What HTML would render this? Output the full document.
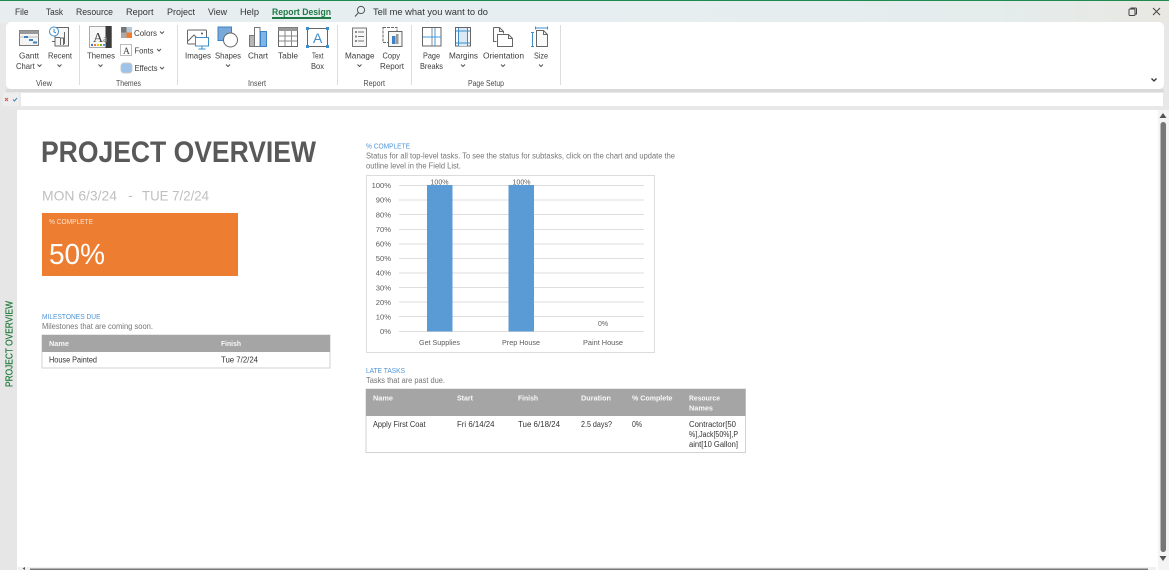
<!DOCTYPE html>
<html><head><meta charset="utf-8"><title>Project Overview</title>
<style>
html,body{margin:0;padding:0;width:1169px;height:570px;overflow:hidden;background:#fff}
svg{display:block;font-family:"Liberation Sans",sans-serif;filter:blur(.25px)}
.t{font-size:9.5px;fill:#333}
.r{font-size:8.4px;fill:#3c3c3c}
.g{font-size:7.8px;fill:#4c4c4c}
.b{font-size:7.5px;fill:#4f95d6}
.d{font-size:8px;fill:#767676}
.h{font-size:7.6px;fill:#f8f8f8;font-weight:bold}
.c{font-size:7.8px;fill:#333}
.a{font-size:7.6px;fill:#5c5c5c}
.ch{fill:none;stroke:#555;stroke-width:1}
</style></head><body>
<svg width="1169" height="570" viewBox="0 0 1169 570" xmlns="http://www.w3.org/2000/svg">
<defs><linearGradient id="tb" x1="0" x2="1" y1="0" y2="0"><stop offset="0" stop-color="#e8edf0"/><stop offset=".5" stop-color="#e6eef1"/><stop offset=".85" stop-color="#e4ecec"/><stop offset="1" stop-color="#e9e8e2"/></linearGradient></defs>
<rect width="1169" height="110" fill="#e8e8e8"/>
<rect width="1169" height="23" fill="url(#tb)"/>
<rect width="1169" height="1" fill="#1f8a50"/>
<g class="t">
<text x="15" y="15" textLength="13.500" lengthAdjust="spacingAndGlyphs">File</text>
<text x="46" y="15" textLength="17" lengthAdjust="spacingAndGlyphs">Task</text>
<text x="76" y="15" textLength="37" lengthAdjust="spacingAndGlyphs">Resource</text>
<text x="126" y="15" textLength="27.500" lengthAdjust="spacingAndGlyphs">Report</text>
<text x="167" y="15" textLength="28" lengthAdjust="spacingAndGlyphs">Project</text>
<text x="208" y="15" textLength="19" lengthAdjust="spacingAndGlyphs">View</text>
<text x="240" y="15" textLength="19" lengthAdjust="spacingAndGlyphs">Help</text>
<text x="272" y="15" textLength="59" lengthAdjust="spacingAndGlyphs" style="fill:#1d7a45;font-weight:bold">Report Design</text>
<text x="373" y="15" textLength="115" lengthAdjust="spacingAndGlyphs">Tell me what you want to do</text>
</g>
<rect x="272" y="17" width="59" height="2" fill="#1d7a45"/>
<circle cx="361" cy="10" r="3.600" fill="none" stroke="#555"/><path d="M358.400 12.800L355 16.500" stroke="#555" stroke-width="1.100"/>
<rect x="1129" y="9" width="6" height="6.500" rx="1" fill="none" stroke="#444"/><path d="M1131 9V8h4.500a1 1 0 0 1 1 1v5h-1" fill="none" stroke="#444"/>
<path d="M1153 8l7 7M1160 8l-7 7" stroke="#444" stroke-width="1"/>

<rect x="6" y="89" width="1158" height="3" fill="#d9d9d9"/>
<rect x="6" y="22" width="1158" height="67" rx="5" fill="#fff"/>
<g fill="#dcdcdc"><rect x="79" y="25" width="1" height="60"/><rect x="177" y="25" width="1" height="60"/><rect x="337" y="25" width="1" height="60"/><rect x="411" y="25" width="1" height="60"/><rect x="560" y="25" width="1" height="60"/></g>

<g class="r">
<text x="19" y="58.500" textLength="20" lengthAdjust="spacingAndGlyphs">Gantt</text><text x="16" y="69" textLength="18.700" lengthAdjust="spacingAndGlyphs">Chart</text>
<text x="48" y="58.500" textLength="24" lengthAdjust="spacingAndGlyphs">Recent</text>
<text x="87" y="58.500" textLength="28" lengthAdjust="spacingAndGlyphs">Themes</text>
<text x="185" y="58.500" textLength="26" lengthAdjust="spacingAndGlyphs">Images</text>
<text x="215" y="58.500" textLength="26" lengthAdjust="spacingAndGlyphs">Shapes</text>
<text x="248" y="58.500" textLength="20" lengthAdjust="spacingAndGlyphs">Chart</text>
<text x="278" y="58.500" textLength="20" lengthAdjust="spacingAndGlyphs">Table</text>
<text x="312" y="58.500" textLength="11.500" lengthAdjust="spacingAndGlyphs">Text</text><text x="311" y="69" textLength="13" lengthAdjust="spacingAndGlyphs">Box</text>
<text x="345" y="58.500" textLength="29.500" lengthAdjust="spacingAndGlyphs">Manage</text>
<text x="382.500" y="58.500" textLength="17.500" lengthAdjust="spacingAndGlyphs">Copy</text><text x="380" y="69" textLength="24" lengthAdjust="spacingAndGlyphs">Report</text>
<text x="423" y="58.500" textLength="17" lengthAdjust="spacingAndGlyphs">Page</text><text x="420" y="69" textLength="23" lengthAdjust="spacingAndGlyphs">Breaks</text>
<text x="449" y="58.500" textLength="29" lengthAdjust="spacingAndGlyphs">Margins</text>
<text x="483" y="58.500" textLength="41" lengthAdjust="spacingAndGlyphs">Orientation</text>
<text x="534" y="58.500" textLength="14" lengthAdjust="spacingAndGlyphs">Size</text>
<text x="134" y="36" textLength="23" lengthAdjust="spacingAndGlyphs">Colors</text>
<text x="134.500" y="53.500" textLength="19" lengthAdjust="spacingAndGlyphs">Fonts</text>
<text x="134.500" y="71" textLength="23" lengthAdjust="spacingAndGlyphs">Effects</text>
</g>
<g class="g">
<text x="36" y="86" textLength="16" lengthAdjust="spacingAndGlyphs">View</text>
<text x="116" y="86" textLength="25" lengthAdjust="spacingAndGlyphs">Themes</text>
<text x="248" y="86" textLength="18" lengthAdjust="spacingAndGlyphs">Insert</text>
<text x="363.500" y="86" textLength="21.500" lengthAdjust="spacingAndGlyphs">Report</text>
<text x="468" y="86" textLength="36" lengthAdjust="spacingAndGlyphs">Page Setup</text>
</g>
<g class="ch">
<path d="M37.500 64.500l2 2 2-2M57.500 64.500l2 2 2-2M98.500 64.500l2 2 2-2M226 64.500l2 2 2-2M357.500 64.500l2 2 2-2M461 64.500l2 2 2-2M501 64.500l2 2 2-2M539 64.500l2 2 2-2"/>
<path d="M160 31.500l2 2 2-2M157 49l2 2 2-2M160 67l2 2 2-2"/>
<path d="M1151.500 78.500l2.500 2.500 2.500-2.500" stroke-width="1.300" stroke="#333"/>
</g>

<!-- Gantt -->
<rect x="19.500" y="30.500" width="19" height="15" fill="#f4f4f4" stroke="#777"/><rect x="19.500" y="30.500" width="19" height="3.500" fill="#999"/>
<path d="M19.500 37h19" stroke="#bbb"/><rect x="24" y="36" width="4" height="2" fill="#3d83c4"/><rect x="29" y="39" width="4" height="2" fill="#3d83c4"/><rect x="33" y="41.500" width="4" height="2" fill="#3d83c4"/>
<!-- Recent -->
<path d="M55 27.500h13.500v18.500h-13.500z" fill="#f7f7f7" stroke="#666"/>
<path d="M60.500 45v-7h3v7M64.500 44v-12M52 41.500h3v-4h5" fill="none" stroke="#666"/>
<circle cx="54" cy="31.500" r="4.500" fill="#fff" stroke="#3d8ecb"/><path d="M54 29v3l2 1" fill="none" stroke="#3d8ecb"/>
<!-- Themes -->
<rect x="89.500" y="26.500" width="22" height="21" fill="#f8f8f8" stroke="#aaa"/><rect x="105.500" y="26" width="6" height="22" fill="#3b3b3b"/>
<text x="93" y="42" font-size="14" font-family="Liberation Serif" fill="#444">A</text><text x="103" y="42" font-size="10" font-family="Liberation Serif" fill="#777">a</text>
<g><rect x="91" y="44" width="2" height="2" fill="#4472c4"/><rect x="94" y="44" width="2" height="2" fill="#ed7d31"/><rect x="97" y="44" width="2" height="2" fill="#ffc000"/><rect x="100" y="44" width="2" height="2" fill="#70ad47"/><rect x="103" y="44" width="2" height="2" fill="#5b9bd5"/></g>
<!-- Colors, Fonts, Effects -->
<rect x="121" y="27" width="5.500" height="5.500" fill="#777"/><rect x="126.500" y="27" width="5.500" height="5.500" fill="#b5c8d8"/><rect x="121" y="32.500" width="5.500" height="5.500" fill="#aaa"/><rect x="126.500" y="32.500" width="5.500" height="5.500" fill="#ee7d31"/>
<rect x="120.500" y="44.500" width="11" height="11" fill="#fff" stroke="#bbb"/><text x="123" y="54" font-size="9.500" font-family="Liberation Serif" fill="#444">A</text>
<rect x="121" y="63" width="11" height="10" rx="3" fill="#9dc3e8" stroke="#c9c9c9"/>
<!-- Images -->
<rect x="187.500" y="30" width="19" height="14" rx="1" fill="#fff" stroke="#666"/><path d="M188 41l6-6 5 5" fill="none" stroke="#666"/><circle cx="202" cy="33.500" r="1" fill="#555"/>
<rect x="195.500" y="37.500" width="13" height="8.500" fill="#fff" stroke="#3d8ecb"/><path d="M202 46v2.500M198.500 49h7" stroke="#3d8ecb"/>
<!-- Shapes -->
<rect x="218" y="27" width="13.500" height="13.500" fill="#79a9d9" stroke="#3d83c4"/><circle cx="230.500" cy="40" r="7" fill="#fff" stroke="#666"/>
<!-- Chart -->
<rect x="249.500" y="35.500" width="5" height="11" fill="#b5b5b5" stroke="#777"/><rect x="254.500" y="27.500" width="5.500" height="19" fill="#fff" stroke="#777"/><rect x="260.500" y="31.500" width="6" height="15" fill="#7fb4e4" stroke="#3d83c4"/>
<!-- Table -->
<rect x="278.500" y="27.500" width="19" height="19" fill="#fff" stroke="#666"/><rect x="278.500" y="27.500" width="19" height="3.500" fill="#999"/><path d="M285 31v15M291.500 31v15M279 36h18M279 41h18" stroke="#888" fill="none"/>
<!-- Text box -->
<rect x="307.500" y="28.500" width="20" height="18" fill="#fff" stroke="#666"/><text x="313" y="43" font-size="14" fill="#3d8ecb">A</text>
<g fill="#3d8ecb"><rect x="306" y="27" width="3" height="3"/><rect x="326" y="27" width="3" height="3"/><rect x="306" y="45" width="3" height="3"/><rect x="326" y="45" width="3" height="3"/></g>
<!-- Manage -->
<rect x="352.500" y="28" width="14" height="18.500" fill="#f6f6f6" stroke="#777"/><path d="M358 32h6M358 36.500h6M358 41h6" stroke="#777"/><g fill="#888"><rect x="355" y="31" width="2" height="2"/><rect x="355" y="35.500" width="2" height="2"/><rect x="355" y="40" width="2" height="2"/></g>
<!-- Copy report -->
<rect x="383" y="27.500" width="14" height="15" fill="#fff" stroke="#666" stroke-dasharray="3 1"/><rect x="388.500" y="31.500" width="13.500" height="15" fill="#f6f6f6" stroke="#666"/><rect x="392" y="36" width="3.500" height="8" fill="#3d83c4"/><rect x="396" y="34" width="2.500" height="10" fill="#999"/>
<!-- Page Breaks -->
<rect x="422.500" y="27.500" width="18.500" height="18.500" fill="#fff" stroke="#666"/><path d="M432 28v18" stroke="#888"/><path d="M423 37h18M435 28v18" stroke="#3d9be0"/>
<!-- Margins -->
<rect x="455.500" y="27.500" width="15" height="18.500" fill="#f8f8f8" stroke="#666"/><rect x="458" y="28" width="10" height="18" fill="#dbe9f6"/><path d="M458.500 28v18M467.500 28v18M456 31h14M456 43h14" stroke="#3d8ecb"/>
<!-- Orientation -->
<path d="M493.500 27.500h6l4 4v2M493.500 27.500v14h3" fill="#f8f8f8" stroke="#666"/><path d="M497.500 34.500h11l4 4v8h-15z" fill="#fff" stroke="#666"/><path d="M499.500 27.500v4h4M508.500 34.500v4h4" fill="none" stroke="#666"/>
<!-- Size -->
<path d="M536.500 30.500h7l4 4v12h-11z" fill="#fafafa" stroke="#666"/><path d="M543.500 30.500v4h4" fill="none" stroke="#666"/>
<path d="M535.500 28h12M535.500 26.500v3M547.500 26.500v3M532.500 32.500v14M531 32.500h3M531 46.500h3" stroke="#3d8ecb" fill="none"/>

<!-- Formula bar -->
<rect x="3" y="93" width="16" height="13" fill="#eee"/>
<path d="M5 98l3 3M8 98l-3 3" stroke="#d9534f"/><path d="M13 99.500l1.500 1.500 2.500-3" fill="none" stroke="#4a7fb5"/>
<rect x="21" y="93" width="1142" height="13" fill="#fff"/>

<!-- Sheet -->
<rect x="0" y="110" width="17" height="460" fill="#e6e6e6"/>
<rect x="17" y="110" width="1152" height="460" fill="#fff"/>
<text transform="translate(12.500,387) rotate(-90)" font-size="9.800" fill="#217a3c" stroke="#217a3c" stroke-width=".2" textLength="86" lengthAdjust="spacingAndGlyphs">PROJECT OVERVIEW</text>

<text x="41" y="162" font-size="29.500" font-weight="bold" fill="#595959" textLength="275" lengthAdjust="spacingAndGlyphs">PROJECT OVERVIEW</text>
<g font-size="14" fill="#bfbfbf">
<text x="42" y="200.500" textLength="75" lengthAdjust="spacingAndGlyphs">MON 6/3/24</text>
<text x="128" y="200">-</text>
<text x="142" y="200.500" textLength="67" lengthAdjust="spacingAndGlyphs">TUE 7/2/24</text>
</g>
<rect x="42" y="213" width="196" height="63" fill="#ed7d31"/>
<text x="49" y="224" font-size="7.200" fill="#fbe3d2" textLength="44" lengthAdjust="spacingAndGlyphs">% COMPLETE</text>
<text x="49" y="264" font-size="29" fill="#fff" textLength="56" lengthAdjust="spacingAndGlyphs">50%</text>

<text class="b" x="42" y="319" textLength="58.500" lengthAdjust="spacingAndGlyphs">MILESTONES DUE</text>
<text class="d" x="42" y="329" textLength="111" lengthAdjust="spacingAndGlyphs">Milestones that are coming soon.</text>
<rect x="42" y="335" width="288" height="33" fill="#fff" stroke="#d2d2d2"/>
<rect x="42" y="335" width="288" height="17" fill="#a5a5a5"/>
<text class="h" x="49" y="346" textLength="20" lengthAdjust="spacingAndGlyphs">Name</text><text class="h" x="221" y="346" textLength="20" lengthAdjust="spacingAndGlyphs">Finish</text>
<text class="c" x="49" y="362.500" textLength="48" lengthAdjust="spacingAndGlyphs">House Painted</text>
<text class="c" x="221" y="362.500" textLength="37" lengthAdjust="spacingAndGlyphs">Tue 7/2/24</text>

<text class="b" x="366" y="148.500" textLength="44" lengthAdjust="spacingAndGlyphs">% COMPLETE</text>
<text class="d" x="366" y="158.500" textLength="309" lengthAdjust="spacingAndGlyphs">Status for all top-level tasks. To see the status for subtasks, click on the chart and update the</text>
<text class="d" x="366" y="168.500" textLength="95" lengthAdjust="spacingAndGlyphs">outline level in the Field List.</text>

<rect x="366.500" y="175.500" width="288" height="177" fill="#fff" stroke="#dcdcdc"/>
<g stroke="#dedede" stroke-width="1">
<path d="M399 185.500h245M399 200h245M399 214.500h245M399 229.500h245M399 244h245M399 258.500h245M399 273h245M399 287.500h245M399 302h245M399 316.500h245M399 331.500h245"/>
</g>
<rect x="427" y="185" width="25.500" height="146.500" fill="#5b9bd5"/>
<rect x="508.500" y="185" width="25.500" height="146.500" fill="#5b9bd5"/>
<g class="a" text-anchor="end">
<text x="391" y="188">100%</text><text x="391" y="202.700">90%</text><text x="391" y="217.300">80%</text><text x="391" y="232">70%</text><text x="391" y="246.500">60%</text><text x="391" y="261">50%</text><text x="391" y="275.700">40%</text><text x="391" y="290.300">30%</text><text x="391" y="304.800">20%</text><text x="391" y="319.500">10%</text><text x="391" y="334">0%</text>
</g>
<g class="a">
<text x="430.500" y="184.500" textLength="18" lengthAdjust="spacingAndGlyphs">100%</text><text x="512.500" y="184.500" textLength="18" lengthAdjust="spacingAndGlyphs">100%</text><text x="598" y="326" textLength="10" lengthAdjust="spacingAndGlyphs">0%</text>
<text x="419" y="345" textLength="41" lengthAdjust="spacingAndGlyphs">Get Supplies</text><text x="502" y="345" textLength="38" lengthAdjust="spacingAndGlyphs">Prep House</text><text x="583" y="345" textLength="40" lengthAdjust="spacingAndGlyphs">Paint House</text>
</g>

<text class="b" x="366" y="373" textLength="39" lengthAdjust="spacingAndGlyphs">LATE TASKS</text>
<text class="d" x="366" y="383" textLength="79" lengthAdjust="spacingAndGlyphs">Tasks that are past due.</text>
<rect x="366" y="389" width="379.500" height="63.500" fill="#fff" stroke="#d2d2d2"/>
<rect x="366" y="389" width="379.500" height="27" fill="#a5a5a5"/>
<g class="h">
<text x="373" y="400.500" textLength="20" lengthAdjust="spacingAndGlyphs">Name</text>
<text x="457" y="400.500" textLength="16" lengthAdjust="spacingAndGlyphs">Start</text>
<text x="518" y="400.500" textLength="20" lengthAdjust="spacingAndGlyphs">Finish</text>
<text x="581" y="400.500" textLength="30" lengthAdjust="spacingAndGlyphs">Duration</text>
<text x="632" y="400.500" textLength="40.500" lengthAdjust="spacingAndGlyphs">% Complete</text>
<text x="689" y="400.500" textLength="31" lengthAdjust="spacingAndGlyphs">Resource</text>
<text x="689" y="410.500" textLength="24" lengthAdjust="spacingAndGlyphs">Names</text>
</g>
<g class="c">
<text x="373" y="427" textLength="52.500" lengthAdjust="spacingAndGlyphs">Apply First Coat</text>
<text x="457" y="427" textLength="37.500" lengthAdjust="spacingAndGlyphs">Fri 6/14/24</text>
<text x="518" y="427" textLength="42" lengthAdjust="spacingAndGlyphs">Tue 6/18/24</text>
<text x="581" y="427" textLength="31" lengthAdjust="spacingAndGlyphs">2.5 days?</text>
<text x="632" y="427" textLength="10" lengthAdjust="spacingAndGlyphs">0%</text>
<text x="689" y="427" textLength="47" lengthAdjust="spacingAndGlyphs">Contractor[50</text>
<text x="689" y="437" textLength="49" lengthAdjust="spacingAndGlyphs">%],Jack[50%],P</text>
<text x="689" y="447" textLength="49" lengthAdjust="spacingAndGlyphs">aint[10 Gallon]</text>
</g>

<!-- Scrollbars -->
<rect x="1158" y="110" width="11" height="460" fill="#f4f4f4"/>
<path d="M1163 113l3.500 5h-7z" fill="#555"/><path d="M1163 561l3.500-5h-7z" fill="#555"/>
<rect x="1160.500" y="122" width="5.500" height="430" rx="2.700" fill="#777"/>
<rect x="18" y="567" width="1138" height="3" fill="#f0f0f0"/>
<path d="M22.500 568.500l2.500-1.500v3z" fill="#555"/>
<rect x="30" y="568.500" width="1118" height="1.500" fill="#777"/>
</svg>
</body></html>
